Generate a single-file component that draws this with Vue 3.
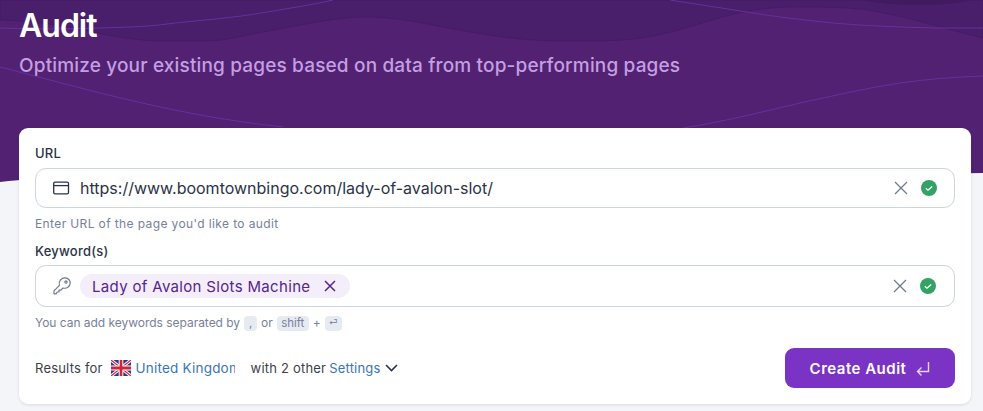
<script setup>
const urlValue = 'https://www.boomtownbingo.com/lady-of-avalon-slot/'
const keyword = 'Lady of Avalon Slots Machine'
</script>

<template>
  <div class="page">
    <svg class="hero-bg" viewBox="0 0 983 182" width="983" height="182" aria-hidden="true">
      <path d="M0 0H983V173C800 176 500 150 300 178C200 186 80 172 0 182Z" class="hero-base" />
      <path d="M0 20C30 21 55 24 83 30C112 36 135 41 167 41C195 41 215 42 233 38C258 33 278 29 300 25C322 21 345 17 367 17C420 17 480 41 564 41C600 41 632 42 667 33C695 26 715 18 743 12C765 8 780 7 800 7C825 7 845 7 867 10C892 14 912 19 933 25C950 30 968 34 983 38V0H0Z" class="hero-dark" />
      <path d="M860 0C880 3 895 5 917 5C940 5 958 3 973 0Z" class="hero-darker" />
      <path d="M0 28C35 29 70 29 100 28C125 27 145 27 167 24C200 20 235 18 267 12C290 8 312 5 333 0" class="hero-line" />
      <path d="M670 0C695 4 722 8 747 12C775 17 805 20 833 23C865 26 900 27 933 28C950 28 966 28 983 28" class="hero-line" />
      <path d="M0 67C33 76 67 84 100 93C133 101 167 109 200 115C228 120 256 124 283 127" class="hero-line" />
      <path d="M683 128C722 122 762 112 800 103C833 96 866 88 900 83C928 79 955 77 983 76" class="hero-line" />
    </svg>

    <header class="hero">
      <h1>Audit</h1>
      <p>Optimize your existing pages based on data from top-performing pages</p>
    </header>

    <form class="card" @submit.prevent>
      <label class="label">URL</label>
      <div class="field url-field">
        <svg class="lead-icon" width="18" height="16" viewBox="0 0 18 16" fill="none" stroke="#2b3347" stroke-width="1.3">
          <rect x="1.7" y="2.2" width="14.8" height="11.6" rx="1.4" />
          <path d="M1.7 5.6H16.5" />
        </svg>
        <span class="value">{{ urlValue }}</span>
        <svg class="clear" width="16" height="16" viewBox="0 0 16 16" stroke="#6f7a90" stroke-width="1.3" fill="none">
          <path d="M2 2L14 14M14 2L2 14" />
        </svg>
        <svg class="ok" width="16" height="16" viewBox="0 0 16 16">
          <circle cx="8" cy="8" r="8" fill="#35a265" />
          <path d="M4.8 8.2L7 10.2L11.2 6.4" fill="none" stroke="#fff" stroke-width="1.3" />
        </svg>
      </div>
      <div class="hint">Enter URL of the page you'd like to audit</div>

      <label class="label kw-label">Keyword(s)</label>
      <div class="field kw-field">
        <svg class="lead-icon" width="18" height="18" viewBox="0 0 18 18" fill="none" stroke="#6f7a90" stroke-width="1.2" stroke-linejoin="round">
          <path d="M6.4 8.4C5.3 4.3 8.6 0.6 12.2 0.8C15.2 1 17.4 3.4 17.2 6.2C17 9.6 13.6 12 10 11L7.8 13.2H6V15H4.2L3.2 16.8H1V13.8Z" />
          <circle cx="13" cy="5" r="1.1" />
        </svg>
        <span class="chip">
          {{ keyword }}
          <svg width="12" height="12" viewBox="0 0 12 12" fill="none" stroke="#56258f" stroke-width="1.5">
            <path d="M1 1L11 11M11 1L1 11" />
          </svg>
        </span>
        <svg class="clear" width="16" height="16" viewBox="0 0 16 16" stroke="#6f7a90" stroke-width="1.3" fill="none">
          <path d="M2 2L14 14M14 2L2 14" />
        </svg>
        <svg class="ok" width="16" height="16" viewBox="0 0 16 16">
          <circle cx="8" cy="8" r="8" fill="#35a265" />
          <path d="M4.8 8.2L7 10.2L11.2 6.4" fill="none" stroke="#fff" stroke-width="1.3" />
        </svg>
      </div>
      <div class="hint keys">
        <span>You can add keywords separated by</span>
        <kbd class="k-comma">,</kbd>
        <span>or</span>
        <kbd class="k-shift">shift</kbd>
        <span>+</span>
        <kbd class="k-enter">⏎</kbd>
      </div>

      <div class="footer">
        <span class="results">Results for</span>
        <svg class="flag" width="20" height="16" viewBox="0 0 60 46" preserveAspectRatio="none">
          <rect width="60" height="46" fill="#2b3a86" />
          <path d="M0 0L60 46M60 0L0 46" stroke="#fff" stroke-width="9" />
          <path d="M0 0L60 46M60 0L0 46" stroke="#d0243a" stroke-width="3.5" />
          <path d="M30 0V46M0 23H60" stroke="#fff" stroke-width="14" />
          <path d="M30 0V46M0 23H60" stroke="#d0243a" stroke-width="8" />
        </svg>
        <span class="country">United Kingdom</span>
        <span class="others">with 2 other</span>
        <span class="settings">Settings</span>
        <svg class="chev" width="13" height="8" viewBox="0 0 13 8" fill="none" stroke="#2b3347" stroke-width="1.6">
          <path d="M1 1L6.5 6.5L12 1" />
        </svg>
        <button class="submit" type="submit">
          Create Audit
          <svg width="14" height="15" viewBox="0 0 14 15" fill="none" stroke="#e3d5f3" stroke-width="1.4">
            <path d="M12.5 1V10.5H1.5M5.5 6.5L1.5 10.5L5.5 14.5" />
          </svg>
        </button>
      </div>
    </form>
  </div>
</template>

<style scoped>
.page {
  position: relative;
  width: 983px;
  height: 411px;
  overflow: hidden;
  background: #f4f5f8;
  font-family: "Inter", "Lato", sans-serif;
  color: #2b3347;
}
.hero-bg {
  position: absolute;
  left: 0;
  top: 0;
}
.hero-base { fill: #522172; }
.hero-dark { fill: #491e6b; stroke: #431a62; stroke-width: 0.7; }
.hero-darker { fill: #421a60; }
.hero-line { fill: none; stroke: #65309f; stroke-width: 1; }
.hero {
  position: relative;
  padding: 7px 19px 0;
  height: 128px;
  box-sizing: border-box;
}
.hero h1 {
  margin: 0;
  font-size: 32px;
  line-height: 38px;
  font-weight: 600;
  letter-spacing: -1px;
  color: #fff;
}
.hero p {
  margin: 7px 0 0;
  font-size: 19px;
  line-height: 28px;
  font-weight: 500;
  letter-spacing: 0.16px;
  color: #c39fe2;
}
.card {
  position: relative;
  display: flex;
  flex-direction: column;
  width: 952px;
  height: 276px;
  margin-left: 19px;
  padding: 16px 16px 0;
  box-sizing: border-box;
  background: #fff;
  border-radius: 9px;
  box-shadow: 0 1px 3px rgba(30, 40, 70, 0.12);
}
.label {
  font-size: 13px;
  line-height: 18px;
  font-weight: 500;
  letter-spacing: 0.25px;
  color: #2b3347;
}
.field {
  display: flex;
  align-items: center;
  margin-top: 6px;
  padding: 0 17px 0 16px;
  border: 1px solid #cdd5e2;
  border-radius: 11px;
  box-sizing: border-box;
}
.url-field { height: 40px; }
.kw-field { height: 42px; margin-top: 5px; padding: 0 18px 0 17px; }
.lead-icon { flex: none; margin-right: 10px; }
.kw-field .lead-icon { margin-right: 9px; }
.value {
  flex: 1;
  font-size: 16px;
  color: #2b3347;
}
.chip {
  display: inline-flex;
  align-items: center;
  gap: 14px;
  height: 24px;
  padding: 0 14px 0 12px;
  border-radius: 12px;
  background: #f4eefb;
  color: #56258f;
  font-size: 15px;
  letter-spacing: 0.33px;
}
.clear { margin-left: auto; }
.ok { margin-left: 12px; }
.hint {
  margin-top: 8px;
  font-size: 12px;
  line-height: 16px;
  letter-spacing: 0.38px;
  color: #77819a;
}
.kw-label { margin-top: 10px; }
.keys {
  display: flex;
  align-items: center;
  gap: 4px;
  letter-spacing: -0.03px;
}
kbd {
  display: flex;
  align-items: center;
  justify-content: center;
  height: 15px;
  font-family: inherit;
  font-size: 11.5px;
  border-radius: 4px;
  background: #e6ebf2;
  color: #77819a;
}
.k-comma { width: 13px; }
.k-shift { width: 32px; }
.k-enter { width: 17px; font-size: 9px; }
.footer {
  display: flex;
  align-items: center;
  margin-top: 17px;
  font-size: 13px;
  letter-spacing: 0.2px;
  color: #3b3f49;
}
.flag { margin-left: 8px; flex: none; }
.country {
  width: 99px;
  margin-left: 5px;
  overflow: hidden;
  white-space: nowrap;
  font-size: 13.5px;
  color: #3a75b8;
}
.others { margin-left: 16px; }
.settings { margin-left: 3px; color: #3a75b8; }
.chev { margin-left: 4px; }
.submit {
  display: flex;
  align-items: center;
  justify-content: center;
  gap: 10px;
  width: 170px;
  height: 40px;
  margin-left: auto;
  border: none;
  border-radius: 9px;
  background: #7a33c4;
  color: #fff;
  font-family: inherit;
  font-size: 15px;
  font-weight: 600;
  letter-spacing: 0.5px;
}
</style>
